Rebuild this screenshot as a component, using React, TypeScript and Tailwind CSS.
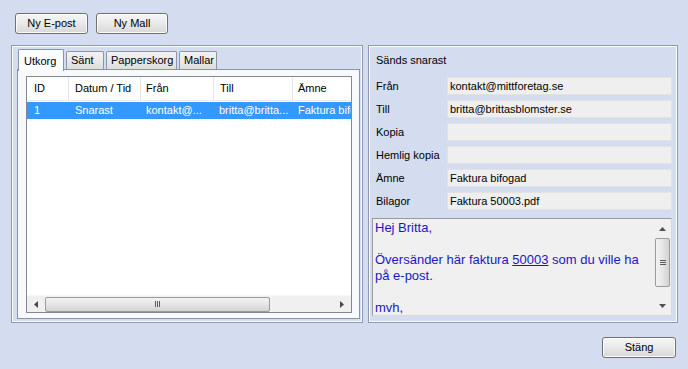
import React from "react";

const font = { fontFamily: '"Liberation Sans", Arial, sans-serif' };

function WinButton({ label, w }: { label: string; w: string }) {
  return (
    <div
      className={`${w} h-[21px] rounded-[3px] border border-[#707070] bg-gradient-to-b from-[#f6f6f6] via-[#e9e9e9] to-[#d8d8d8] flex items-center justify-center text-[11px] text-black shadow-[inset_0_0_0_1px_#fcfcfc]`}
    >
      {label}
    </div>
  );
}

function Tab({ label, w, active }: { label: string; w: string; active?: boolean }) {
  if (active) {
    return (
      <div
        className={`${w} h-[22px] -mb-[1px] relative z-10 border border-b-0 border-[#8994a6] bg-[#fbfcfe] rounded-t-[2px] flex items-start pt-[3px] pl-[5px] text-[11px] self-start`}
      >
        {label}
      </div>
    );
  }
  return (
    <div
      className={`${w} h-[18px] mt-[2px] border border-b-0 border-[#8994a6] bg-gradient-to-b from-[#f3f3f3] to-[#dedede] rounded-t-[2px] flex items-center pl-[4px] text-[11px]`}
    >
      {label}
    </div>
  );
}

function Field({ label, value }: { label: string; value?: string }) {
  return (
    <div className="flex items-center h-[18px]">
      <div className="w-[75px] pl-[4px] text-[11px] text-black whitespace-nowrap">{label}</div>
      <div className="w-[225px] h-[18px] bg-[#efefef] border border-[#e2e2e2] flex items-center pl-[2px] text-[11px] text-black">
        {value}
      </div>
    </div>
  );
}

export default function App() {
  return (
    <div
      className="w-[688px] h-[369px] bg-[#d4ddef] overflow-hidden relative text-black"
      style={font}
    >
      {/* top buttons */}
      <div className="flex gap-[8px] pt-[13px] pl-[15px]">
        <WinButton label="Ny E-post" w="w-[73px]" />
        <WinButton label="Ny Mall" w="w-[72px]" />
      </div>

      {/* main row */}
      <div className="flex gap-[5px] mt-[11px] ml-[11px]">
        {/* left panel */}
        <div className="w-[352px] h-[278px] border border-[#8d99ad] shadow-[inset_0_0_0_1px_#ffffff] pt-[3px] pl-[5px]">
          <div className="flex gap-[2px] h-[21px] items-start pl-[1px]">
            <Tab label="Utkorg" w="w-[46px]" active />
            <Tab label="Sänt" w="w-[38px]" />
            <Tab label="Papperskorg" w="w-[71px]" />
            <Tab label="Mallar" w="w-[38px]" />
          </div>
          <div className="w-[343px] h-[250px] -mt-[1px] border border-[#8994a6] bg-[#f7f9fd] pt-[6px] pl-[8px]">
            {/* listview */}
            <div className="w-[326px] h-[237px] border border-[#828790] bg-white flex flex-col">
              {/* header */}
              <div className="flex h-[24px] items-center text-[11px] border-b border-[#ececec] bg-white">
                <div className="w-[42px] h-full flex items-center pl-[7px] border-r border-[#e5e5e5]">ID</div>
                <div className="w-[72px] h-full flex items-center pl-[6px] border-r border-[#e5e5e5]">Datum / Tid</div>
                <div className="w-[73px] h-full flex items-center pl-[5px] border-r border-[#e5e5e5]">Från</div>
                <div className="w-[79px] h-full flex items-center pl-[6px] border-r border-[#e5e5e5]">Till</div>
                <div className="flex-1 h-full flex items-center pl-[5px] whitespace-nowrap overflow-hidden">Ämne</div>
              </div>
              {/* selected row */}
              <div className="flex h-[17px] mt-[1px] items-center text-[11px] text-white bg-[#3399ff] whitespace-nowrap overflow-hidden">
                <div className="w-[42px] pl-[7px]">1</div>
                <div className="w-[72px] pl-[6px]">Snarast</div>
                <div className="w-[73px] pl-[5px]">kontakt@...</div>
                <div className="w-[79px] pl-[5px]">britta@britta...</div>
                <div className="flex-1 pl-[5px] overflow-hidden">Faktura bifogad</div>
              </div>
              <div className="flex-1" />
              {/* horizontal scrollbar */}
              <div className="h-[17px] bg-[#f0f0f0] flex items-center border-t border-[#f6f6f6]">
                <div className="w-[18px] flex items-center justify-center">
                  <svg width="4" height="7" viewBox="0 0 4 7"><path d="M4 0 L0 3.5 L4 7 Z" fill="#4a4a4a" /></svg>
                </div>
                <div className="w-[225px] h-[15px] rounded-[2px] border border-[#9b9b9b] bg-gradient-to-b from-[#f2f2f2] via-[#e6e6e6] to-[#d2d2d2] flex items-center justify-center">
                  <div className="flex gap-[1px]">
                    <div className="w-[1px] h-[6px] bg-[#5c5c5c]" />
                    <div className="w-[1px] h-[6px] bg-[#5c5c5c]" />
                    <div className="w-[1px] h-[6px] bg-[#5c5c5c]" />
                  </div>
                </div>
                <div className="flex-1" />
                <div className="w-[18px] flex items-center justify-center">
                  <svg width="4" height="7" viewBox="0 0 4 7"><path d="M0 0 L4 3.5 L0 7 Z" fill="#4a4a4a" /></svg>
                </div>
              </div>
            </div>
          </div>
        </div>

        {/* right panel */}
        <div className="w-[310px] h-[278px] border border-[#8d99ad] shadow-[inset_0_0_0_1px_#ffffff] pt-[7px] pl-[3px]">
          <div className="h-[14px] pl-[4px] text-[11px] leading-[14px]">Sänds snarast</div>
          <div className="mt-[10px] flex flex-col gap-[5px]">
            <Field label="Från" value="kontakt@mittforetag.se" />
            <Field label="Till" value="britta@brittasblomster.se" />
            <Field label="Kopia" />
            <Field label="Hemlig kopia" />
            <Field label="Ämne" value="Faktura bifogad" />
            <Field label="Bilagor" value="Faktura 50003.pdf" />
          </div>
          {/* message body */}
          <div className="mt-[8px] w-[300px] h-[98px] border border-[#9a9a9a] border-r-[#d8d8d8] border-b-[#d8d8d8] bg-[#f0f0f0] flex overflow-hidden">
            <div className="flex-1 pl-[2px] pt-[1px] text-[13px] leading-[16px] text-[#1818c8] whitespace-nowrap overflow-hidden">
              <div>Hej Britta,</div>
              <div>&nbsp;</div>
              <div>
                Översänder här faktura <span className="underline">50003</span> som du ville ha
              </div>
              <div>på e-post.</div>
              <div>&nbsp;</div>
              <div>mvh,</div>
            </div>
            <div className="w-[17px] h-full bg-[#f0f0f0] flex flex-col items-center">
              <div className="h-[19px] flex items-center justify-center">
                <svg width="7" height="4" viewBox="0 0 7 4"><path d="M0 4 L3.5 0 L7 4 Z" fill="#505050" /></svg>
              </div>
              <div className="w-[15px] h-[49px] rounded-[2px] border border-[#9b9b9b] bg-gradient-to-r from-[#f2f2f2] via-[#e6e6e6] to-[#d2d2d2] flex items-center justify-center">
                <div className="flex flex-col gap-[1px]">
                  <div className="w-[6px] h-[1px] bg-[#5c5c5c]" />
                  <div className="w-[6px] h-[1px] bg-[#5c5c5c]" />
                  <div className="w-[6px] h-[1px] bg-[#5c5c5c]" />
                </div>
              </div>
              <div className="flex-1" />
              <div className="h-[19px] flex items-center justify-center">
                <svg width="7" height="4" viewBox="0 0 7 4"><path d="M0 0 L3.5 4 L7 0 Z" fill="#505050" /></svg>
              </div>
            </div>
          </div>
        </div>
      </div>

      {/* bottom button */}
      <div className="flex justify-end mt-[14px] pr-[12px]">
        <WinButton label="Stäng" w="w-[74px]" />
      </div>
    </div>
  );
}
